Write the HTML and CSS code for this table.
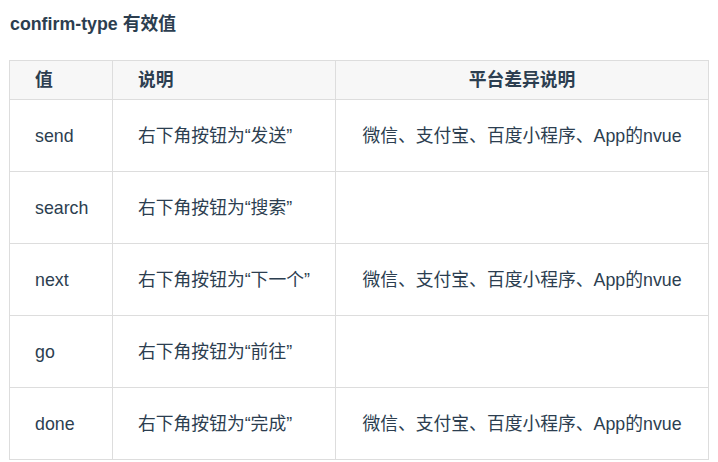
FILE: index.html
```html
<!DOCTYPE html>
<html>
<head>
<meta charset="utf-8">
<link rel="stylesheet" href="styles.css">
</head>
<body>
<div class="page">
  <h3 class="title">confirm-type 有效值</h3>
  <table class="values">
    <colgroup>
      <col class="c1"><col class="c2"><col class="c3">
    </colgroup>
    <thead>
      <tr><th>值</th><th>说明</th><th class="center">平台差异说明</th></tr>
    </thead>
    <tbody>
      <tr><td>send</td><td>右下角按钮为“发送”</td><td class="center">微信、支付宝、百度小程序、App的nvue</td></tr>
      <tr><td>search</td><td>右下角按钮为“搜索”</td><td class="center"></td></tr>
      <tr><td>next</td><td>右下角按钮为“下一个”</td><td class="center">微信、支付宝、百度小程序、App的nvue</td></tr>
      <tr><td>go</td><td>右下角按钮为“前往”</td><td class="center"></td></tr>
      <tr><td>done</td><td>右下角按钮为“完成”</td><td class="center">微信、支付宝、百度小程序、App的nvue</td></tr>
    </tbody>
  </table>
</div>
</body>
</html>
```
FILE: styles.css
```css
html, body {
  margin: 0;
  padding: 0;
  background: #fff;
}
body {
  font-family: "Liberation Sans", "Noto Sans CJK SC", sans-serif;
  font-size: 17.8px;
  color: #2c3e50;
}
.page {
  padding: 12px 0 0 9px;
}
.title {
  margin: 0 0 23px 1px;
  font-size: 17.8px;
  font-weight: bold;
  line-height: 25px;
}
.values {
  border-collapse: collapse;
  width: 699px;
  table-layout: fixed;
}
.c1 { width: 103px; }
.c2 { width: 223px; }
.c3 { width: 373px; }
.values th, .values td {
  border: 1px solid #dddddd;
  padding: 0 25px;
  text-align: left;
  vertical-align: middle;
  line-height: 24px;
}
.values th {
  height: 38px;
  background: #f7f7f7;
  font-weight: bold;
}
.values td {
  height: 71px;
}
.values .center {
  text-align: center;
  padding: 0;
}
```
